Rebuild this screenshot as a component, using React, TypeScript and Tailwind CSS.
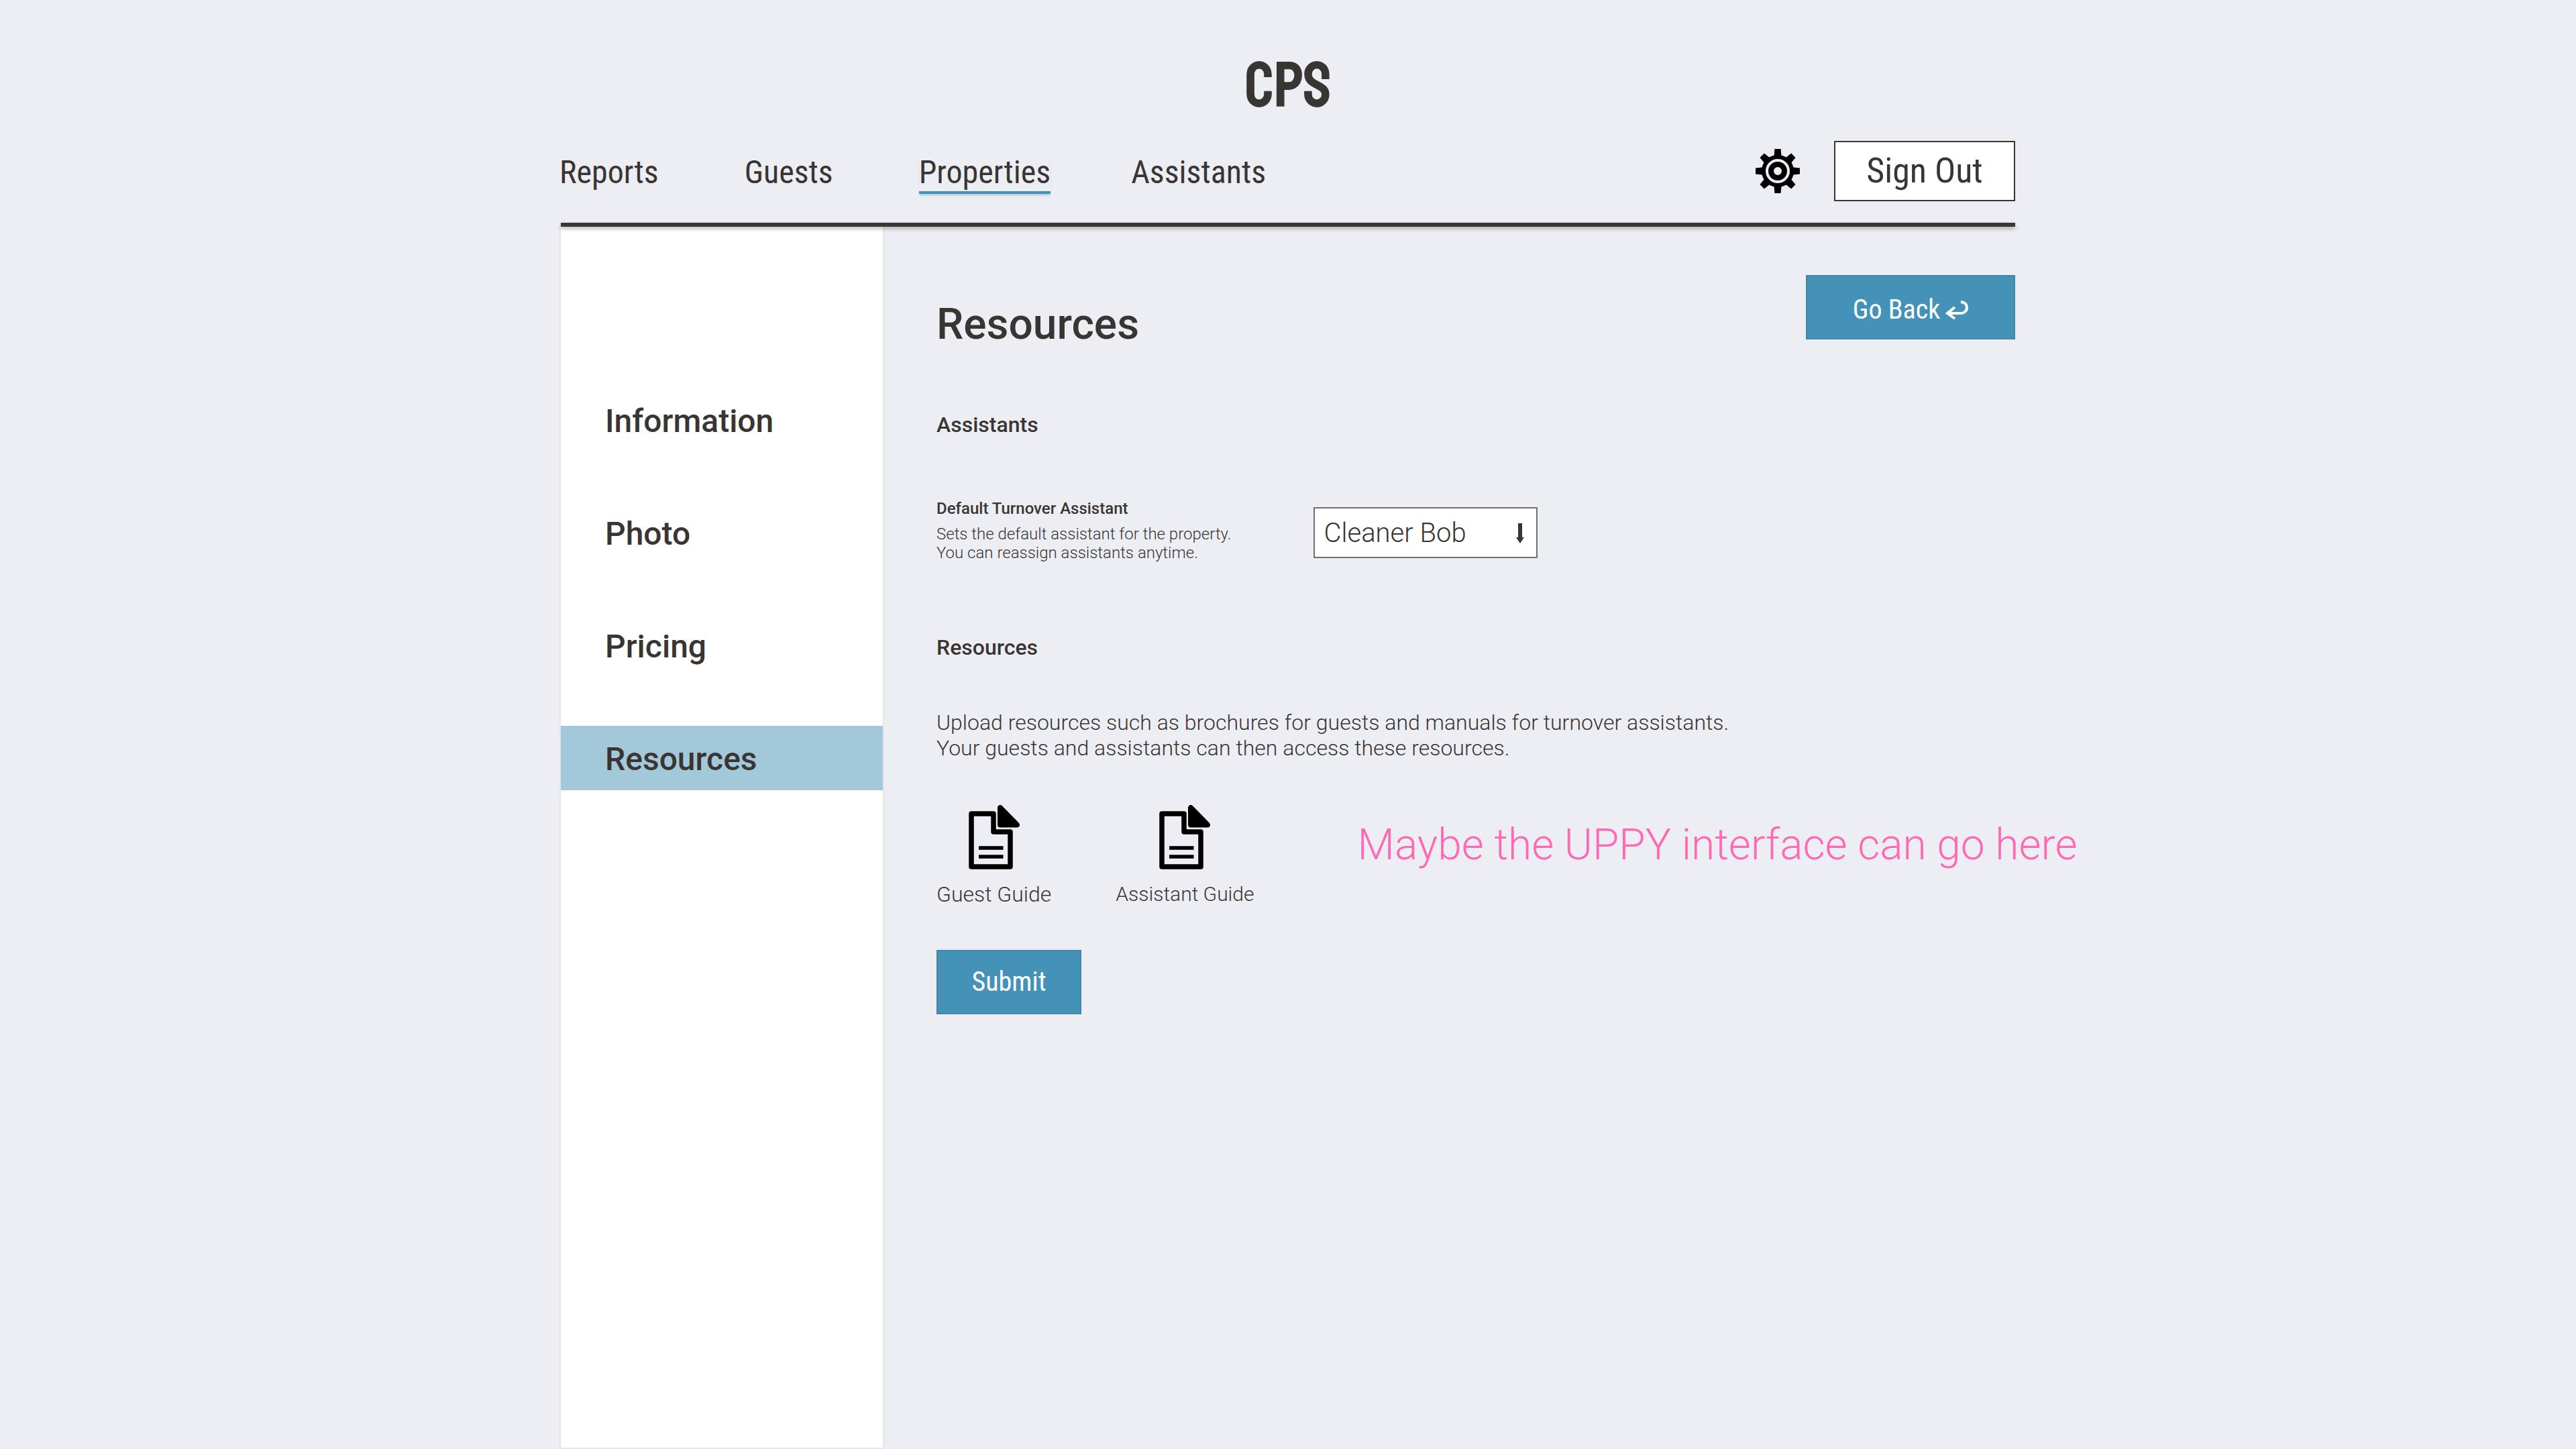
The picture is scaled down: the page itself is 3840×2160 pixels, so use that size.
const TEETH = [0, 45, 90, 135, 180, 225, 270, 315];

function GearIcon() {
  return (
    <svg viewBox="0 0 68 68" className="size-[68px]" fill="none" stroke="#000" aria-hidden="true">
      <circle cx="34" cy="34" r="21" strokeWidth="6" />
      <circle cx="34" cy="34" r="10" strokeWidth="8" />
      {TEETH.map((a) => (
        <path key={a} d="M27 12.5 L28.6 10.5 L29.4 1 H38.6 L39.4 10.5 L41 12.5 Z" fill="#000" stroke="none" transform={`rotate(${a} 34 34)`} />
      ))}
    </svg>
  );
}

function ReturnIcon() {
  return (
    <svg viewBox="0 0 34 28" className="h-[28px] w-[34px]" fill="none" stroke="currentColor" strokeWidth="4" aria-hidden="true">
      <path d="M23 2 C29 2.500 32 6 32 10.500 C32 15.500 28 19 23 19 H3" />
      <path d="M14 10 L3 19 L14 27" />
    </svg>
  );
}

function DocumentIcon() {
  return (
    <svg viewBox="0 0 76 96" className="h-[96px] w-[76px]" fill="none" stroke="#000" strokeLinejoin="round" aria-hidden="true">
      <path d="M4 13 H37 V40 H62 V92 H4 Z" strokeWidth="7.500" />
      <path d="M47 4 V29.500 H72 Z" fill="#000" strokeWidth="8" />
      <path d="M15 64 H51.500 M15 77 H51.500" strokeWidth="5.500" />
    </svg>
  );
}

const NAV = ["Reports", "Guests", "Properties", "Assistants"];
const SIDE = ["Information", "Photo", "Pricing", "Resources"];

export default function App() {
  return (
    <div className="flex min-h-screen flex-col overflow-x-hidden bg-[#edeef4] font-['Roboto',sans-serif] text-[#393533]">
      <div className="mx-auto flex w-full max-w-[2168px] grow flex-col">
        <header className="pt-[74px]">
          <h1 className="text-center font-['Staatliches','Bebas_Neue','Roboto_Condensed',sans-serif] text-[96px]/[108px]">CPS</h1>
          <div className="mt-[28px] flex items-center justify-between pb-[32px]">
            <nav className="-ml-0.5 flex gap-32 pt-2 font-['Roboto_Condensed','Roboto',sans-serif] text-[48px]/[56px]">
              {NAV.map((n) => (
                <a
                  key={n}
                  href="#"
                  className={
                    n === "Properties"
                      ? "border-b-4 border-[#4492b7] shadow-[0_3px_3px_-1px_rgba(68,146,183,0.4)]"
                      : "border-b-4 border-transparent last:-ml-2"
                  }
                >
                  {n}
                </a>
              ))}
            </nav>
            <div className="flex items-center gap-[50px]">
              <button aria-label="Settings"><GearIcon /></button>
              <button className="h-[90px] w-[270px] border-2 border-[#393533] bg-white font-['Roboto_Condensed','Roboto',sans-serif] text-[52px]">Sign Out</button>
            </div>
          </div>
        </header>
        <hr className="relative h-1.5 border-0 bg-[#393533] shadow-[0_3px_6px_rgba(0,0,0,0.3)]" />

        <div className="-ml-0.5 flex grow">
          <aside className="w-[484px] shrink-0 border-2 border-t-0 border-[#e5e5e5] bg-white pt-[240px]">
            <nav className="flex flex-col gap-[72px] text-[48px]/[92px] font-medium">
              {SIDE.map((s) => (
                <a key={s} href="#" className={s === "Resources" ? "bg-[#a2c8d9] pl-[66px] pt-1" : "pl-[66px] pt-1"}>{s}</a>
              ))}
            </nav>
          </aside>

          <main className="min-w-0 grow pl-[78px] pt-[72px]">
            <div className="flex justify-between">
              <h2 className="pt-[36px] text-[64px]/[76px] font-medium">Resources</h2>
              <button className="flex h-[96px] w-[312px] items-center justify-center gap-2 border-2 border-[#4287a8] bg-[#4492b7] pt-2 font-['Roboto_Condensed','Roboto',sans-serif] text-[40px] text-white">
                Go Back <ReturnIcon />
              </button>
            </div>
            <h3 className="mt-[92px] text-[32px]/[38px] font-medium">Assistants</h3>
            <div className="mt-[92px] flex gap-[122px]">
              <label htmlFor="assistant" className="text-[24px]/[28px] font-light">
                <span className="mb-[10px] block font-medium">Default Turnover Assistant</span>
                Sets the default assistant for the property.
                <br />
                You can reassign assistants anytime.
              </label>
              <div className="relative mt-3">
                <select id="assistant" className="h-[76px] w-[334px] appearance-none border-2 border-[#707070] bg-white pl-3.5 pt-0.5 text-[40px] font-light">
                  <option>Cleaner Bob</option>
                </select>
                <svg viewBox="0 0 12 30" className="pointer-events-none absolute right-5 top-6 h-[30px] w-[12px]" fill="currentColor" aria-hidden="true">
                  <path d="M3 0 H9 V21 H12 L6 30 L0 21 H3 Z" />
                </svg>
              </div>
            </div>
            <h3 className="mt-[108px] text-[32px]/[38px] font-medium">Resources</h3>
            <p className="mt-[74px] text-[32px]/[38px] font-light">
              Upload resources such as brochures for guests and manuals for turnover assistants.
              <br />
              Your guests and assistants can then access these resources.
            </p>
            <div className="mt-[66px] flex items-start whitespace-nowrap text-[32px]/[38px] font-light">
              <a href="#" className="flex flex-col items-center gap-[18px]"><DocumentIcon />Guest Guide</a>
              <a href="#" className="ml-24 flex flex-col items-center gap-[18px] text-[30px]/[38px]"><DocumentIcon />Assistant Guide</a>
              <p className="ml-[154px] mt-[22px] text-[64px]/[76px] text-[#ff69b4]">Maybe the UPPY interface can go here</p>
            </div>
            <button className="mt-16 h-[96px] w-[216px] border-2 border-[#4287a8] bg-[#4492b7] font-['Roboto_Condensed','Roboto',sans-serif] text-[40px] text-white">Submit</button>
          </main>
        </div>
      </div>
    </div>
  );
}
